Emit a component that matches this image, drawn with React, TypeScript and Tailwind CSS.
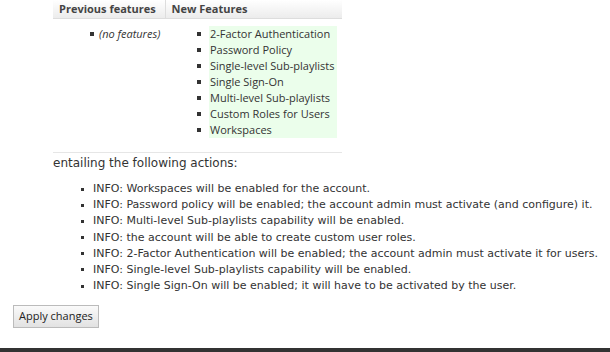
import React from 'react';

const newFeatures = [
  '2-Factor Authentication',
  'Password Policy',
  'Single-level Sub-playlists',
  'Single Sign-On',
  'Multi-level Sub-playlists',
  'Custom Roles for Users',
  'Workspaces',
];

const actions = [
  'INFO: Workspaces will be enabled for the account.',
  'INFO: Password policy will be enabled; the account admin must activate (and configure) it.',
  'INFO: Multi-level Sub-playlists capability will be enabled.',
  'INFO: the account will be able to create custom user roles.',
  'INFO: 2-Factor Authentication will be enabled; the account admin must activate it for users.',
  'INFO: Single-level Sub-playlists capability will be enabled.',
  'INFO: Single Sign-On will be enabled; it will have to be activated by the user.',
];

export default function App() {
  return (
    <div className="w-[610px] h-[352px] bg-white relative overflow-hidden text-[#333] font-['Open_Sans',sans-serif] whitespace-nowrap">
      <table className="ml-[53px] w-[289px] table-fixed border-collapse text-[11px]">
        <thead>
          <tr className="bg-gradient-to-b from-white to-[#ececec] border-b border-[#ddd]">
            <th className="w-[112px] h-[18px] pl-[6px] text-left font-bold text-[#444] leading-[18px] border-r border-[#ddd]">
              Previous features
            </th>
            <th className="pl-[6px] text-left font-bold text-[#444] leading-[18px]">New Features</th>
          </tr>
        </thead>
        <tbody>
          <tr className="border-b border-[#e6e6e6] align-top">
            <td className="pt-[7px] h-[134px]">
              <ul className="pl-[37px]">
                <li className="flex items-center gap-[3px] h-[16px] leading-[16px]">
                  <span className="inline-block w-[4px] h-[4px] bg-[#333] shrink-0" />
                  <i className="pl-[2px]">(no features)</i>
                </li>
              </ul>
            </td>
            <td className="pt-[7px]">
              <ul className="pl-[32px]">
                {newFeatures.map((f) => (
                  <li key={f} className="flex items-center h-[16px] leading-[16px]">
                    <span className="inline-block w-[4px] h-[4px] bg-[#333] shrink-0" />
                    <span className="ml-[8px] pl-[1px] bg-[#ebfeeb] w-[128px] h-[16px]">{f}</span>
                  </li>
                ))}
              </ul>
            </td>
          </tr>
        </tbody>
      </table>

      <p className="ml-[53px] mt-[1px] text-[12px] leading-[18px] text-[#333] font-['DejaVu_Sans',sans-serif]">
        entailing the following actions:
      </p>

      <ul className="mt-[9px] pl-[81px] text-[11px] font-['DejaVu_Sans',sans-serif]">
        {actions.map((a) => (
          <li key={a} className="flex items-center gap-[9px] h-[16.17px] leading-[16px]">
            <span className="inline-block w-[3px] h-[3px] bg-[#333] shrink-0" />
            <span>{a}</span>
          </li>
        ))}
      </ul>

      <div className="ml-[13px] mt-[8px]">
        <button className="h-[23px] px-[5px] border border-[#bbb] bg-gradient-to-b from-[#fafafa] to-[#e2e2e2] text-[11px] text-[#222] font-['Open_Sans',sans-serif] leading-[20px]">
          Apply changes
        </button>
      </div>

      <div className="absolute left-0 right-0 bottom-0 h-[4px] bg-[#333]" />
    </div>
  );
}
